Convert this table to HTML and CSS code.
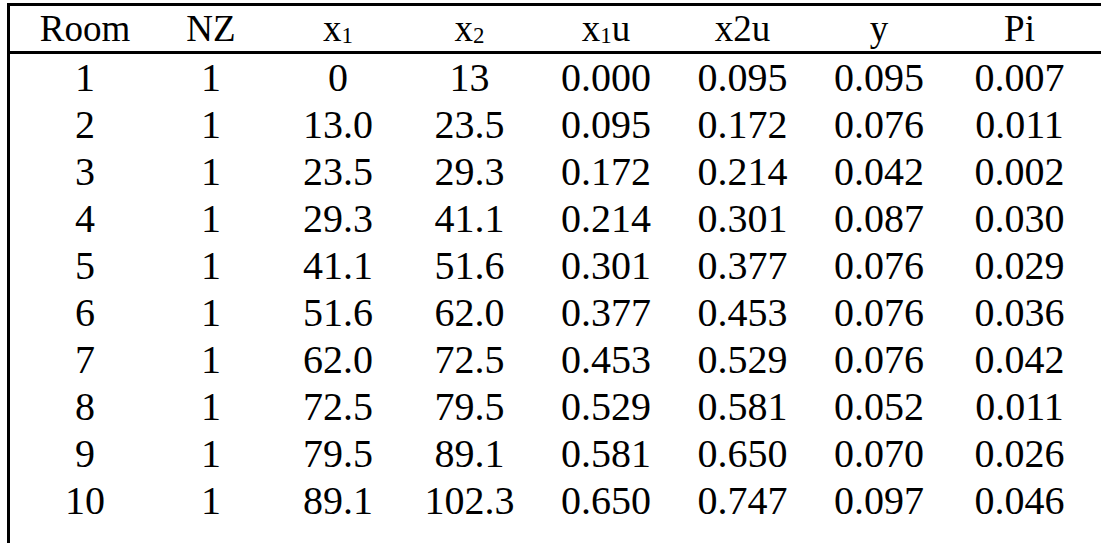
FILE: index.html
```html
<!DOCTYPE html>
<html lang="en">
<head>
  <meta charset="UTF-8" />
  <meta name="viewport" content="width=device-width, initial-scale=1.0"/>
  <link rel="stylesheet" href="styles.css">
</head>
<body>
  <div class="sheet">
    <table class="rooms">
      <colgroup>
        <col class="c-room"><col class="c-nz"><col class="c-x1"><col class="c-x2">
        <col class="c-x1u"><col class="c-x2u"><col class="c-y"><col class="c-pi">
      </colgroup>
      <thead>
        <tr>
          <th>Room</th>
          <th>NZ</th>
          <th>x<sub>1</sub></th>
          <th>x<sub>2</sub></th>
          <th>x<sub>1</sub>u</th>
          <th>x2u</th>
          <th>y</th>
          <th>Pi</th>
        </tr>
      </thead>
      <tbody id="rows"></tbody>
    </table>
  </div>
  <script>
    // room, nz, x1, x2, x1u, x2u, y, pi
    const data = [
      [1, 1, '0', '13', '0.000', '0.095', '0.095', '0.007'],
      [2, 1, '13.0', '23.5', '0.095', '0.172', '0.076', '0.011'],
      [3, 1, '23.5', '29.3', '0.172', '0.214', '0.042', '0.002'],
      [4, 1, '29.3', '41.1', '0.214', '0.301', '0.087', '0.030'],
      [5, 1, '41.1', '51.6', '0.301', '0.377', '0.076', '0.029'],
      [6, 1, '51.6', '62.0', '0.377', '0.453', '0.076', '0.036'],
      [7, 1, '62.0', '72.5', '0.453', '0.529', '0.076', '0.042'],
      [8, 1, '72.5', '79.5', '0.529', '0.581', '0.052', '0.011'],
      [9, 1, '79.5', '89.1', '0.581', '0.650', '0.070', '0.026'],
      [10, 1, '89.1', '102.3', '0.650', '0.747', '0.097', '0.046']
    ];

    const tbody = document.getElementById('rows');
    data.forEach(row => {
      const tr = document.createElement('tr');
      row.forEach(val => {
        const td = document.createElement('td');
        td.textContent = val;
        tr.appendChild(td);
      });
      tbody.appendChild(tr);
    });
  </script>
</body>
</html>
```
FILE: styles.css
```css
html, body {
  height: 100%;
}
body {
  margin: 0;
  background: #fff;
  color: #000;
  font-family: 'Liberation Serif', 'Times New Roman', serif;
}
.sheet {
  margin: 3px 0 0 7px;
  height: calc(100% - 3px);
  border-left: 3px solid #000;
  border-top: 3px solid #000;
  box-sizing: border-box;
}
.rooms {
  width: 100%;
  border-collapse: collapse;
  table-layout: fixed;
}
.c-room { width: 138px; }
.c-nz { width: 126px; }
.c-x1 { width: 128px; }
.c-x2 { width: 135px; }
.c-x1u { width: 138px; }
.c-x2u { width: 135px; }
.c-y { width: 138px; }
.rooms th {
  font-weight: normal;
  font-size: 37px;
  height: 45px;
  padding: 0;
  line-height: 45px;
  border-bottom: 3px solid #000;
}
.rooms td {
  font-size: 40px;
  height: 47px;
  line-height: 47px;
  padding: 0;
  text-align: center;
}
.rooms th:first-child,
.rooms td:first-child {
  padding-left: 12px;
}
.rooms th:last-child,
.rooms td:last-child {
  padding-right: 10px;
}
.rooms sub {
  font-size: 0.62em;
  vertical-align: -0.1em;
  line-height: 0;
}
```
